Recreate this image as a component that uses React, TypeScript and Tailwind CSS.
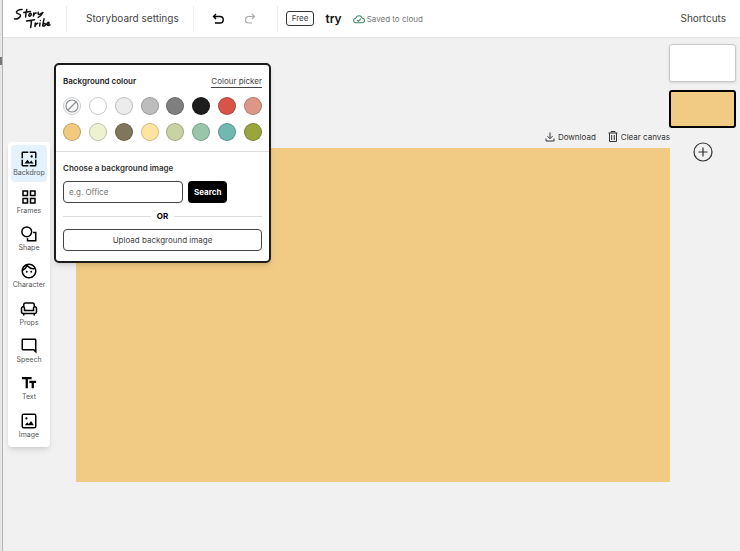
import React, { useState } from 'react';
import {
  MdGridView,
  MdOutlineChair,
  MdOutlineFace,
  MdOutlineModeComment,
  MdTextFields,
  MdWallpaper,
} from 'react-icons/md';

const Logo = () => (
  <svg viewBox="0 0 38 22" className="w-[38px] h-[22px]" fill="none" stroke="#111" strokeWidth="1.5" strokeLinecap="round" strokeLinejoin="round">
    <path d="M9 1.500C6 1.300 3 3 3.500 4.600c.5 1.500 4.200 1.200 4 3C7.300 9.600 4 11.600 1.500 10.800" />
    <path d="M13.800 1.500C13.200 4 12.700 6.500 12.600 9M10.800 4.600l6.700-1" />
    <path d="M17.500 5.200c-1.800.3-2.300 3-.9 3 1.700 0 2.300-2.900.9-3zM20.800 4.900l-.4 3.100c.5-1.600 1.400-2.900 2.800-2.900" />
    <path d="M25.200 4.200c-.5 1.600.2 2.500 1.400 2.100L30 4.500c-1 1.800-2.500 3.700-4.800 4.900" />
    <path d="M13.500 13l8-1.300M18.500 12.400c-.1 2.400-.4 4.600-.8 7" />
    <path d="M22.300 14.900l-.3 3.700c.5-1.900 1.400-3.200 2.800-3.300M27 15l-.4 3.100M27.300 12.400v.2" />
    <path d="M31 10.800l-1.400 7c1.800.5 3.300-.6 2.900-1.700-.4-.9-1.700-.6-2.400.2M33.800 16.300c1.400-.1 2.600-.8 2.200-1.600-.6-.8-2.400.3-2.100 1.800.2 1.200 1.600 1.200 3.100.3" />
  </svg>
);

const ShapeIcon = () => (
  <svg viewBox="0 0 24 24" className="size-[18px]" fill="none" stroke="currentColor" strokeWidth="2">
    <circle cx="9" cy="9" r="6.500" />
    <path d="M17.500 10H21v11H10v-3.500" />
  </svg>
);

const ImageIcon = () => (
  <svg viewBox="0 0 24 24" className="size-[18px]" fill="none" stroke="currentColor" strokeWidth="2">
    <rect x="3" y="3" width="18" height="18" rx="2" />
    <path d="M6.500 17.500l3-4 2.200 2.500 3-4 3.800 5.500z" fill="currentColor" stroke="none" />
    <circle cx="8.500" cy="8.500" r="1.500" fill="currentColor" stroke="none" />
  </svg>
);

const UndoIcon = () => (
  <svg viewBox="0 0 12 12" className="size-3" fill="none" stroke="currentColor" strokeWidth="1.400">
    <path d="M4 1L1.500 3.500 4 6M1.500 3.500H8a3 3 0 0 1 0 6.500H3" />
  </svg>
);

const RedoIcon = () => (
  <svg viewBox="0 0 12 12" className="size-3" fill="none" stroke="currentColor" strokeWidth="1.200">
    <path d="M8 1l2.500 2.500L8 6M10.500 3.500H4A3 3 0 0 0 1.500 6.500v.5a3 3 0 0 0 3 3H8" />
  </svg>
);

const CloudIcon = () => (
  <svg viewBox="0 0 12 10" className="w-3 h-2.5 text-[#3f8a63]" fill="none" stroke="currentColor" strokeWidth="1.100" strokeLinejoin="round">
    <path d="M3 8.800a2.300 2.300 0 0 1-.2-4.600A3.300 3.300 0 0 1 9.200 4.200a2.300 2.300 0 0 1 0 4.600z" />
    <path d="M4 6l1.400 1.300L8 4.700" />
  </svg>
);

const DownloadIcon = () => (
  <svg viewBox="0 0 10 10" className="size-2.5" fill="none" stroke="currentColor">
    <path d="M5 .5v6M2.500 4.200L5 6.700l2.500-2.500M1 6.500v2.500h8V6.500" />
  </svg>
);

const TrashIcon = () => (
  <svg viewBox="0 0 10 11" className="w-2.5 h-[11px]" fill="none" stroke="currentColor">
    <path d="M.5 2h9M3 1.500V.5h4v1M1.500 2v8.500h7V2M3.700 4v5M6.300 4v5" />
  </svg>
);

const tools = [
  { name: 'Backdrop', icon: <MdWallpaper size={18} /> },
  { name: 'Frames', icon: <MdGridView size={18} /> },
  { name: 'Shape', icon: <ShapeIcon /> },
  { name: 'Character', icon: <MdOutlineFace size={18} /> },
  { name: 'Props', icon: <MdOutlineChair size={18} /> },
  { name: 'Speech', icon: <MdOutlineModeComment size={18} /> },
  { name: 'Text', icon: <MdTextFields size={18} /> },
  { name: 'Image', icon: <ImageIcon /> },
];

const colours = [
  { name: 'White', className: 'bg-white' },
  { name: 'Light grey', className: 'bg-[#ececec]' },
  { name: 'Silver', className: 'bg-[#bdbdbd]' },
  { name: 'Grey', className: 'bg-[#7f7f7f]' },
  { name: 'Black', className: 'bg-[#1d1d1d]' },
  { name: 'Red', className: 'bg-[#d95448]' },
  { name: 'Pink', className: 'bg-[#dc9887]' },
  { name: 'Orange', className: 'bg-[#f1ca80]' },
  { name: 'Cream', className: 'bg-[#eff2d0]' },
  { name: 'Brown', className: 'bg-[#80765c]' },
  { name: 'Yellow', className: 'bg-[#ffe5a1]' },
  { name: 'Sage', className: 'bg-[#c9d2a3]' },
  { name: 'Mint', className: 'bg-[#99c6ab]' },
  { name: 'Teal', className: 'bg-[#70b8b0]' },
  { name: 'Olive', className: 'bg-[#99a63e]' },
];

const Header: React.FC = () => (
  <header className="flex items-center h-[38px] shrink-0 bg-white border-b border-[#e2e2e2] text-[#444]">
    <a href="#" aria-label="Story Tribe" className="ml-2.5 mr-[15px]">
      <Logo />
    </a>
    <div className="flex items-center h-[26px] pl-[19px] pr-3.5 border-x border-[#eee]">
      <button type="button" className="text-[10px]">Storyboard settings</button>
    </div>
    <div className="flex items-center gap-5 h-[26px] pl-[18px] pr-[21px] border-r border-[#eee]">
      <button type="button" aria-label="Undo" className="text-black"><UndoIcon /></button>
      <button type="button" aria-label="Redo" className="text-[#aaa]"><RedoIcon /></button>
    </div>
    <span className="ml-2 px-[5px] border border-[#333] rounded-[3px] text-[8px] leading-[13px]">Free</span>
    <h1 className="ml-[11px] text-[12px] font-semibold text-[#111]">try</h1>
    <div className="flex items-center gap-0.5 ml-[11px] text-[8px] text-[#777]">
      <CloudIcon />
      Saved to cloud
    </div>
    <button type="button" className="ml-auto mr-3.5 text-[10px]">Shortcuts</button>
  </header>
);

const BackdropPanel: React.FC = () => {
  const [selected, setSelected] = useState('Orange');

  return (
    <section className="absolute left-[51px] top-[25px] w-[217px] bg-white border-2 border-[#1c1c1c] rounded-[5px] shadow-md text-[8px] text-[#444]">
      <div className="px-[7px] pt-2 pb-2.5 border-b border-[#ddd]">
        <div className="flex items-center justify-between h-4">
          <h2 className="font-semibold text-[#222]">Background colour</h2>
          <button type="button" className="leading-3 border-b border-[#444]">Colour picker</button>
        </div>
        <div className="grid justify-between gap-y-2 mt-2 grid-cols-[repeat(8,18px)]">
          <button
            type="button"
            aria-label="No colour"
            onClick={() => setSelected('')}
            className="flex items-center justify-center size-[18px] rounded-full border border-[#c9cdd0]"
          >
            <svg viewBox="0 0 14 14" className="size-3.5" fill="none" stroke="#8c9196" strokeWidth="1.200">
              <circle cx="7" cy="7" r="6" />
              <path d="M3 11l8-8" />
            </svg>
          </button>
          {colours.map((c) => (
            <button
              key={c.name}
              type="button"
              aria-label={c.name}
              aria-pressed={selected === c.name}
              onClick={() => setSelected(c.name)}
              className={`size-[18px] rounded-full border border-black/20 ${c.className}`}
            />
          ))}
        </div>
      </div>
      <div className="px-[7px] pt-2 pb-2.5">
        <label htmlFor="background-search" className="block leading-4 font-semibold text-[#333]">
          Choose a background image
        </label>
        <div className="flex gap-[5px] mt-[5px]">
          <input
            id="background-search"
            type="text"
            placeholder="e.g. Office"
            className="w-[120px] h-[22px] px-[5px] border border-[#444] rounded placeholder:text-[#777]"
          />
          <button type="button" className="h-[22px] px-1.5 bg-black rounded font-bold text-white">Search</button>
        </div>
        <div className="flex items-center gap-1.5 h-[26px] font-bold text-black">
          <span className="flex-1 h-px bg-[#ddd]" />
          OR
          <span className="flex-1 h-px bg-[#ddd]" />
        </div>
        <button type="button" className="w-full h-[22px] border border-[#444] rounded">
          Upload background image
        </button>
      </div>
    </section>
  );
};

const Toolbar: React.FC = () => {
  const [active, setActive] = useState('Backdrop');

  return (
    <nav className="flex flex-col self-center ml-[5px] w-[42px] min-h-[305px] p-[3px] bg-white rounded shadow-md">
      {tools.map((tool) => (
        <button
          key={tool.name}
          type="button"
          onClick={() => setActive(tool.name)}
          className={`flex flex-col flex-1 items-center justify-center rounded-sm text-[7px] leading-[9px] text-[#555] ${
            active === tool.name ? 'bg-[#e3f2fd]' : ''
          }`}
        >
          <span className="text-black">{tool.icon}</span>
          {tool.name}
        </button>
      ))}
    </nav>
  );
};

const App: React.FC = () => {
  return (
    <div className="flex min-h-screen bg-white font-[Inter,sans-serif]">
      <div className="flex flex-col w-[3px] bg-[#e6e6e6] border-r border-[#b4b4b4]">
        <span className="h-2 mt-[57px] bg-[#777]" />
      </div>
      <div className="flex flex-col flex-1 bg-[#f1f1f1]">
        <Header />
        <main className="relative flex flex-1">
          <Toolbar />
          <section className="flex-1 min-w-0 ml-[26px] pt-[91px]">
            <div className="flex justify-end items-center gap-3 h-[19px] pb-1 text-[8px] text-[#333]">
              <button type="button" className="flex items-center gap-[3px]">
                <DownloadIcon />
                Download
              </button>
              <button type="button" className="flex items-center gap-[3px]">
                <TrashIcon />
                Clear canvas
              </button>
            </div>
            <div className="aspect-video bg-[#f1cb83]" />
          </section>
          <aside className="flex flex-col items-center gap-2 -ml-px mr-1 pt-[6px] w-[67px]">
            <button type="button" aria-label="Frame 1" className="w-full h-[38px] bg-white border border-[#c9c9c9] rounded-[3px] shadow-sm" />
            <button type="button" aria-label="Frame 2" className="w-full h-[38px] bg-[#f1cb83] border-2 border-black rounded-[3px]" />
            <button type="button" aria-label="Add frame" className="mt-1.5 text-[#333]">
              <svg viewBox="0 0 20 20" className="size-5" fill="none" stroke="currentColor" strokeWidth="1.200">
                <circle cx="10" cy="10" r="9" />
                <path d="M10 5.500v9M5.500 10h9" />
              </svg>
            </button>
          </aside>
          <BackdropPanel />
        </main>
      </div>
    </div>
  );
};

export default App;
